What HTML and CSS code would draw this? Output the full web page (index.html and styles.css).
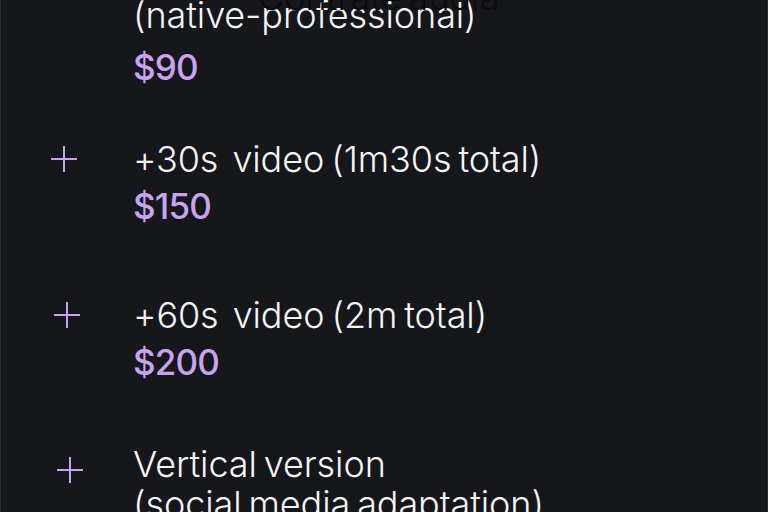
FILE: index.html
```html
<!DOCTYPE html>
<html lang="en">
<head>
<meta charset="utf-8">
<link rel="stylesheet" href="styles.css">
</head>
<body>
<div class="panel">
  <span class="ghost">Contrate audia</span>
  <ul class="list">
    <li class="item item-1">
      <span class="plus"></span>
      <div class="body">
        <p class="title">Voiceover<br>(native-professional)</p>
        <p class="price">$90</p>
      </div>
    </li>
    <li class="item item-2">
      <span class="plus"><svg viewBox="0 0 26 26" width="26" height="26"><path d="M13 0v26M0 13h26"/></svg></span>
      <div class="body">
        <p class="title">+30s&nbsp; video (1m30s total)</p>
        <p class="price">$150</p>
      </div>
    </li>
    <li class="item item-3">
      <span class="plus"><svg viewBox="0 0 26 26" width="26" height="26"><path d="M13 0v26M0 13h26"/></svg></span>
      <div class="body">
        <p class="title">+60s&nbsp; video (2m total)</p>
        <p class="price">$200</p>
      </div>
    </li>
    <li class="item item-4">
      <span class="plus"><svg viewBox="0 0 26 26" width="26" height="26"><path d="M13 0v26M0 13h26"/></svg></span>
      <div class="body">
        <p class="title">Vertical version<br>(social media adaptation)</p>
        <p class="price">$120</p>
      </div>
    </li>
  </ul>
</div>
</body>
</html>
```
FILE: styles.css
```css
html, body {
  margin: 0;
  padding: 0;
  background: #15171b;
  overflow: hidden;
}
.panel {
  position: relative;
  box-sizing: border-box;
  width: 768px;
  height: 512px;
  border-left: 1px solid #2c2f34;
  border-right: 1px solid #2c2f34;
  background: #15171b;
  font-family: Inter, "Noto Sans", sans-serif;
  overflow: hidden;
}
.ghost {
  position: absolute;
  left: 257px;
  top: -23px;
  font-size: 36px;
  line-height: 40px;
  font-weight: 300;
  letter-spacing: 0;
  word-spacing: -3px;
  color: #0a0b0d;
  z-index: 2;
}
.list {
  list-style: none;
  margin: -45px 0 0 0;
  padding: 0;
  display: flex;
  flex-direction: column;
}
.item {
  display: grid;
  grid-template-columns: 132px 1fr;
}
.item-2 { margin-top: 52px; }
.item-3 { margin-top: 69px; }
.item-4 { margin-top: 62px; }
.plus {
  display: block;
}
.plus svg {
  display: block;
  stroke: #c9a3f0;
  stroke-width: 2;
  fill: none;
  margin-left: 50px;
  margin-top: 7px;
}
.item-3 .plus svg { margin-left: 53px; margin-top: 7px; }
.item-4 .plus svg { margin-left: 56px; margin-top: 13px; }
.body { min-width: 0; }
.title {
  margin: 0;
  font-size: 36px;
  line-height: 40px;
  font-weight: 300;
  letter-spacing: -0.1px;
  word-spacing: -3px;
  color: #f4f4f5;
}
.price {
  margin: 7px 0 0 0;
  font-size: 35px;
  line-height: 40px;
  letter-spacing: -0.8px;
  font-weight: 500;
  color: #c9a3f0;
}
.item-1 .price { margin-top: 12px; }
```
